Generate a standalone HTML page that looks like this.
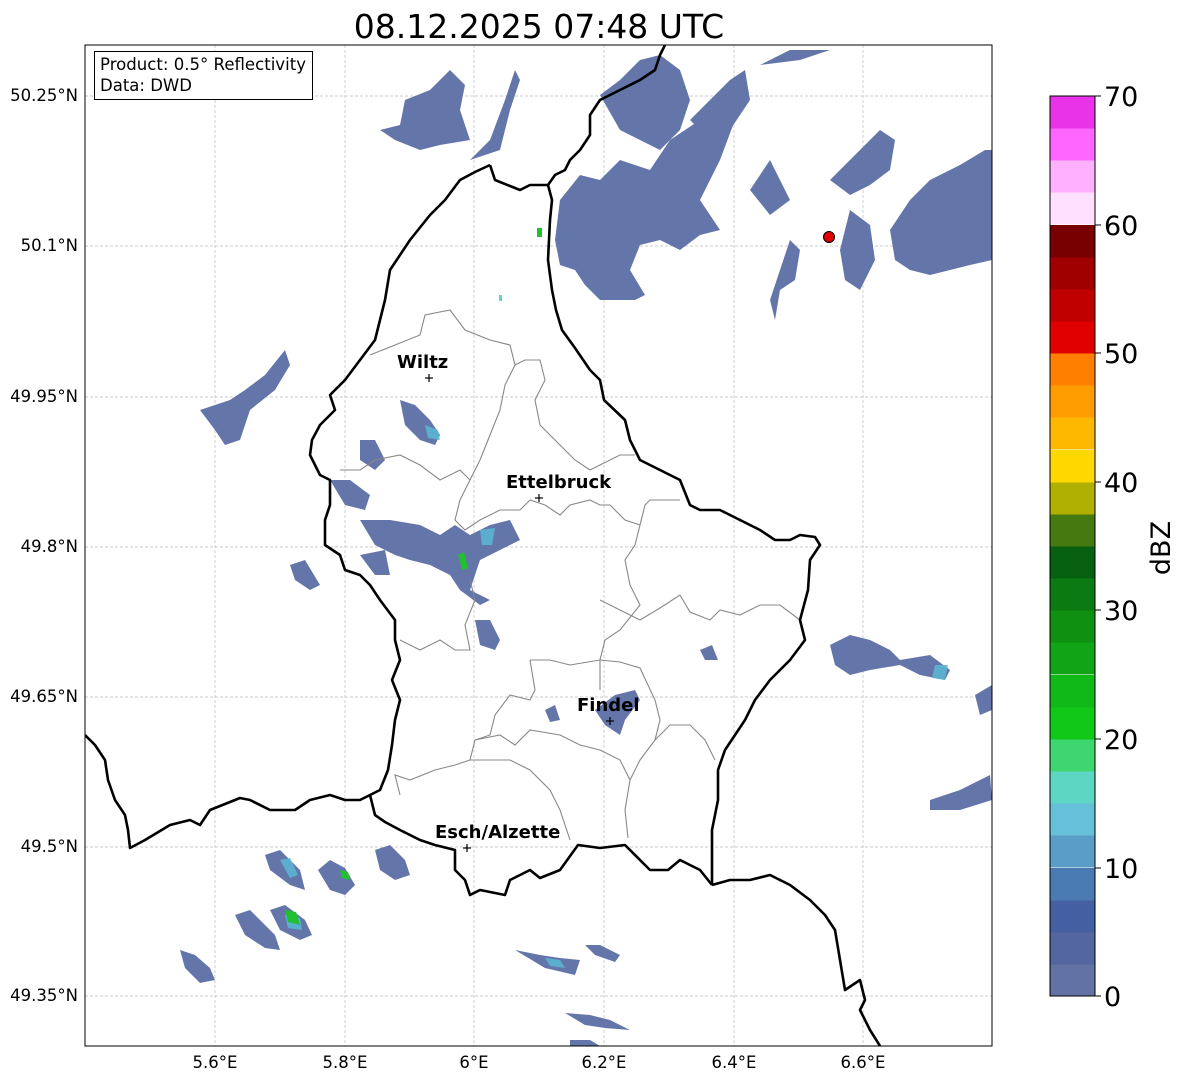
<!DOCTYPE html>
<html><head><meta charset="utf-8"><style>
html,body{margin:0;padding:0;background:#fff;}
svg{display:block;font-family:"DejaVu Sans","Liberation Sans",sans-serif;}
</style></head><body>
<svg width="1184" height="1081" viewBox="0 0 1184 1081" xmlns="http://www.w3.org/2000/svg">
<rect width="1184" height="1081" fill="#fff"/>
<text x="539" y="38" font-size="33" text-anchor="middle" fill="#000">08.12.2025 07:48 UTC</text>
<defs><clipPath id="c"><rect x="85" y="45" width="907" height="1001"/></clipPath></defs>
<g clip-path="url(#c)">
<g stroke="#bbb" stroke-width="0.7" stroke-dasharray="3,2">
<line x1="215" y1="45" x2="215" y2="1046"/><line x1="345" y1="45" x2="345" y2="1046"/><line x1="474" y1="45" x2="474" y2="1046"/><line x1="604" y1="45" x2="604" y2="1046"/><line x1="734" y1="45" x2="734" y2="1046"/><line x1="863" y1="45" x2="863" y2="1046"/>
<line x1="85" y1="96" x2="992" y2="96"/><line x1="85" y1="246" x2="992" y2="246"/><line x1="85" y1="397" x2="992" y2="397"/><line x1="85" y1="547" x2="992" y2="547"/><line x1="85" y1="697" x2="992" y2="697"/><line x1="85" y1="847" x2="992" y2="847"/><line x1="85" y1="996" x2="992" y2="996"/>
</g>
<g fill="#6475aa">
<polygon points="380,130 400,125 405,100 430,90 450,70 465,85 460,110 470,140 440,145 420,150 395,140"/>
<polygon points="470,160 500,150 510,110 520,80 515,70 505,100 490,140"/>
<polygon points="560,200 580,175 600,180 620,160 650,170 670,140 700,120 720,105 735,120 720,160 700,200 720,230 700,235 680,250 660,240 640,245 630,270 645,295 635,300 600,300 585,285 575,270 560,265 555,240"/>
<polygon points="600,95 620,80 640,60 660,55 680,70 690,100 680,130 660,150 640,140 620,130"/>
<polygon points="690,120 710,100 730,80 745,70 750,100 730,130 710,140"/>
<polygon points="760,65 790,50 830,50 800,60"/>
<polygon points="750,190 770,160 780,180 790,200 770,215"/>
<polygon points="830,180 860,150 880,130 895,140 890,170 870,185 850,195"/>
<polygon points="890,230 910,200 930,180 960,165 985,150 992,150 992,260 970,265 950,270 930,275 910,270 895,260"/>
<polygon points="850,210 870,225 875,260 860,290 845,280 840,250"/>
<polygon points="790,240 800,250 795,280 780,290 775,320 770,300 780,270"/>
<polygon points="200,410 230,400 245,390 265,375 285,350 290,365 275,390 250,410 240,440 225,445 215,430"/>
<polygon points="400,400 415,405 430,420 440,435 435,445 420,440 405,425"/>
<polygon points="360,440 375,440 385,460 375,470 360,460"/>
<polygon points="330,480 350,480 370,495 365,510 345,505"/>
<polygon points="360,520 390,520 420,525 440,535 455,525 470,535 490,525 510,520 520,540 500,550 480,560 470,590 490,600 480,605 460,590 450,575 430,565 410,560 395,555 375,545"/>
<polygon points="360,555 385,550 390,575 375,575"/>
<polygon points="290,565 305,560 320,585 310,590 295,580"/>
<polygon points="475,620 490,620 500,640 495,650 480,645"/>
<polygon points="830,645 850,635 870,640 890,650 900,660 930,655 950,670 945,680 920,675 900,665 870,670 850,675 835,665"/>
<polygon points="930,800 960,790 990,775 992,800 960,810 930,810"/>
<polygon points="975,695 992,685 992,710 980,715"/>
<polygon points="545,710 555,705 560,720 550,722"/>
<polygon points="595,710 615,695 635,690 640,700 625,720 620,735 605,725"/>
<polygon points="700,650 712,645 718,660 705,660"/>
<polygon points="375,850 390,845 405,860 410,875 395,880 380,870"/>
<polygon points="318,870 330,860 345,868 355,885 345,895 330,890"/>
<polygon points="265,855 280,850 300,870 305,890 290,885 270,870"/>
<polygon points="235,915 250,910 275,935 280,950 265,948 245,935"/>
<polygon points="270,910 285,905 305,920 312,935 300,940 280,930"/>
<polygon points="180,950 195,955 210,968 215,980 200,983 185,968"/>
<polygon points="515,950 540,955 560,958 580,960 575,975 545,968"/>
<polygon points="585,945 600,945 620,955 615,962 595,955"/>
<polygon points="565,1013 590,1015 610,1020 630,1030 605,1028 585,1025"/>
<polygon points="570,1040 590,1040 600,1046 570,1046"/>
</g>
<g fill="#5ab8d6" opacity="0.85">
<polygon points="280,860 290,858 298,875 290,878"/>
<polygon points="545,958 560,960 565,968 550,966"/>
<polygon points="935,665 948,665 945,680 932,678"/>
<polygon points="480,530 495,528 492,545 482,545"/>
<polygon points="285,915 300,918 302,930 288,928"/>
<polygon points="425,425 438,430 440,440 428,438"/>
</g>
<g fill="#20c030"><rect x="537" y="228" width="5" height="9"/><polygon points="458,555 464,552 468,568 462,570"/><polygon points="285,910 296,912 300,925 288,922"/><polygon points="340,870 348,872 350,880 342,878"/></g>
<rect x="499" y="295" width="3" height="6" fill="#5ed6c4"/>
<g fill="none" stroke="#888" stroke-width="1.1">
<path d="M370,355 L395,345 L420,335 L425,315 L450,310 L465,330 L490,340 L510,345 L515,365 L505,385 L500,410 L490,435 L480,460 L470,480 L460,470 L440,480 L420,465 L400,455 L375,460 L360,470 L340,470"/>
<path d="M515,365 L525,360 L540,360 L545,380 L535,400 L540,425 L560,445 L575,460 L590,470 L600,465 L620,455 L635,455"/>
<path d="M470,480 L460,500 L455,520 L465,530 L480,520 L500,510 L520,510 L530,500 L545,505 L560,515 L570,505 L590,500 L600,505 L610,505 L625,520 L640,525 L645,505 L650,500 L680,500"/>
<path d="M640,525 L635,545 L625,560 L630,585 L640,605 L620,630 L605,640 L600,660 L600,690"/>
<path d="M470,580 L475,600 L465,625 L470,650 L455,650 L440,640 L420,650 L400,640"/>
<path d="M530,660 L550,660 L570,665 L600,660 L620,662 L640,668 L655,700 L660,720 L655,740 L640,760 L630,780"/>
<path d="M600,600 L620,610 L640,620 L660,608 L680,595 L690,612 L710,620 L720,610 L740,615 L760,605 L780,605 L800,620"/>
<path d="M530,660 L535,690 L530,700 L510,695 L495,715 L490,735 L475,740 L470,760 L455,765 L435,770 L410,780 L395,775 L400,795"/>
<path d="M475,740 L500,735 L515,745 L530,730 L560,735 L580,745 L600,750 L620,760 L630,780 L625,810 L628,838"/>
<path d="M470,760 L490,760 L510,760 L530,770 L550,790 L560,810 L570,840"/>
<path d="M655,740 L670,725 L690,725 L705,740 L715,760"/>
</g>
<g fill="none" stroke="#000" stroke-width="2.6" stroke-linejoin="round">
<path d="M490,165 L495,180 L520,190 L530,185 L548,185 L552,200 L550,220 L548,260 L552,290 L556,310 L562,330 L575,348 L590,370 L600,380 L604,400 L625,420 L630,440 L640,460 L660,470 L680,480 L690,505 L700,510 L720,510 L740,520 L760,530 L775,540 L790,540 L800,535 L815,537 L820,545 L810,560 L808,590 L800,620 L805,640 L790,660 L770,680 L755,700 L745,720 L735,735 L725,750 L718,770 L718,800 L712,830 L712,885"/>
<path d="M712,885 L730,880 L750,880 L770,875 L790,885 L810,900 L825,915 L835,930 L840,960 L845,990 L860,980 L865,1000 L860,1010 L870,1030 L880,1046"/>
<path d="M712,885 L700,870 L680,860 L668,870 L650,870 L625,845 L600,848 L578,845 L560,870 L540,878 L530,870 L510,880 L505,895 L480,890 L470,895 L465,880 L455,870 L455,850 L435,845 L420,840 L400,830 L385,822 L375,815 L370,795 L380,790 L388,770 L392,745 L395,720 L400,700 L392,680 L400,660 L395,640 L395,620 L380,600 L370,585 L360,575 L345,570 L340,555 L325,545 L325,520 L330,505 L330,480 L320,475 L310,455 L312,440 L320,425 L335,410 L330,395 L345,380 L360,360 L375,340 L380,320 L385,300 L390,270 L410,240 L430,215 L445,200 L460,180 L475,172 L490,165"/>
<path d="M548,185 L555,175 L565,170 L570,160 L580,150 L590,135 L590,115 L600,100 L620,90 L640,80 L655,70 L660,55 L665,45"/>
<path d="M85,735 L95,745 L105,760 L108,780 L115,800 L125,815 L128,830 L130,848 L145,840 L170,825 L190,820 L200,825 L210,810 L240,798 L250,800 L270,810 L295,810 L310,800 L330,795 L345,800 L360,800 L370,795"/>
</g>
<g stroke="#000" stroke-width="1.2">
<line x1="425" y1="378" x2="433" y2="378"/><line x1="429" y1="374" x2="429" y2="382"/>
<line x1="535" y1="498" x2="543" y2="498"/><line x1="539" y1="494" x2="539" y2="502"/>
<line x1="606" y1="721" x2="614" y2="721"/><line x1="610" y1="717" x2="610" y2="725"/>
<line x1="463" y1="848" x2="471" y2="848"/><line x1="467" y1="844" x2="467" y2="852"/>
</g>
<circle cx="829" cy="237" r="5.5" fill="#e00000" stroke="#000" stroke-width="1"/>
<g font-size="18" font-weight="bold" fill="#000">
<text x="397" y="368">Wiltz</text>
<text x="506" y="488">Ettelbruck</text>
<text x="577" y="711">Findel</text>
<text x="435" y="838">Esch/Alzette</text>
</g>
</g>
<rect x="85" y="45" width="907" height="1001" fill="none" stroke="#000" stroke-width="1"/>
<rect x="94.5" y="51.5" width="218" height="48" fill="#fff" stroke="#000" stroke-width="1"/>
<text x="100" y="70" font-size="16.5" textLength="206" lengthAdjust="spacingAndGlyphs">Product: 0.5° Reflectivity</text>
<text x="100" y="91" font-size="16.5">Data: DWD</text>
<g font-size="16.5" fill="#000" text-anchor="end">
<text x="78" y="101">50.25°N</text><text x="78" y="251">50.1°N</text><text x="78" y="402">49.95°N</text><text x="78" y="552">49.8°N</text><text x="78" y="702">49.65°N</text><text x="78" y="852">49.5°N</text><text x="78" y="1001">49.35°N</text>
</g>
<g font-size="16.5" fill="#000" text-anchor="middle">
<text x="215" y="1068">5.6°E</text><text x="345" y="1068">5.8°E</text><text x="474" y="1068">6°E</text><text x="604" y="1068">6.2°E</text><text x="734" y="1068">6.4°E</text><text x="863" y="1068">6.6°E</text>
</g>
<g>
<rect x="1050" y="964" width="45" height="32.5" fill="#6272a4"/>
<rect x="1050" y="932" width="45" height="32.5" fill="#5466a0"/>
<rect x="1050" y="900" width="45" height="32.5" fill="#4460a2"/>
<rect x="1050" y="868" width="45" height="32.5" fill="#4a7ab2"/>
<rect x="1050" y="835" width="45" height="32.5" fill="#5a9ec8"/>
<rect x="1050" y="803" width="45" height="32.5" fill="#66c0da"/>
<rect x="1050" y="771" width="45" height="32.5" fill="#5ed6c4"/>
<rect x="1050" y="739" width="45" height="32.5" fill="#3ed670"/>
<rect x="1050" y="707" width="45" height="32.5" fill="#10c818"/>
<rect x="1050" y="675" width="45" height="32.5" fill="#10b818"/>
<rect x="1050" y="642" width="45" height="32.5" fill="#10a416"/>
<rect x="1050" y="610" width="45" height="32.5" fill="#109010"/>
<rect x="1050" y="578" width="45" height="32.5" fill="#0c7a12"/>
<rect x="1050" y="546" width="45" height="32.5" fill="#066010"/>
<rect x="1050" y="514" width="45" height="32.5" fill="#447a10"/>
<rect x="1050" y="482" width="45" height="32.5" fill="#b0b000"/>
<rect x="1050" y="450" width="45" height="32.5" fill="#ffd800"/>
<rect x="1050" y="417" width="45" height="32.5" fill="#ffb800"/>
<rect x="1050" y="385" width="45" height="32.5" fill="#ff9c00"/>
<rect x="1050" y="353" width="45" height="32.5" fill="#ff8000"/>
<rect x="1050" y="321" width="45" height="32.5" fill="#e00000"/>
<rect x="1050" y="289" width="45" height="32.5" fill="#c00000"/>
<rect x="1050" y="257" width="45" height="32.5" fill="#a00000"/>
<rect x="1050" y="225" width="45" height="32.5" fill="#780000"/>
<rect x="1050" y="192" width="45" height="32.5" fill="#ffe0ff"/>
<rect x="1050" y="160" width="45" height="32.5" fill="#ffb0ff"/>
<rect x="1050" y="128" width="45" height="32.5" fill="#ff66ff"/>
<rect x="1050" y="96" width="45" height="32.5" fill="#e833e8"/>
<rect x="1050" y="96" width="45" height="900" fill="none" stroke="#000" stroke-width="1"/>
<g stroke="#000" stroke-width="1">
<line x1="1095" y1="96" x2="1101" y2="96"/><line x1="1095" y1="225" x2="1101" y2="225"/><line x1="1095" y1="353" x2="1101" y2="353"/><line x1="1095" y1="482" x2="1101" y2="482"/><line x1="1095" y1="610" x2="1101" y2="610"/><line x1="1095" y1="739" x2="1101" y2="739"/><line x1="1095" y1="868" x2="1101" y2="868"/><line x1="1095" y1="996" x2="1101" y2="996"/>
</g>
<g font-size="27" fill="#000">
<text x="1104" y="106">70</text><text x="1104" y="235">60</text><text x="1104" y="363">50</text><text x="1104" y="492">40</text><text x="1104" y="620">30</text><text x="1104" y="749">20</text><text x="1104" y="878">10</text><text x="1104" y="1006">0</text>
</g>
<text transform="translate(1170,548) rotate(-90)" font-size="27" text-anchor="middle">dBZ</text>
</g>
</svg>
</body></html>
